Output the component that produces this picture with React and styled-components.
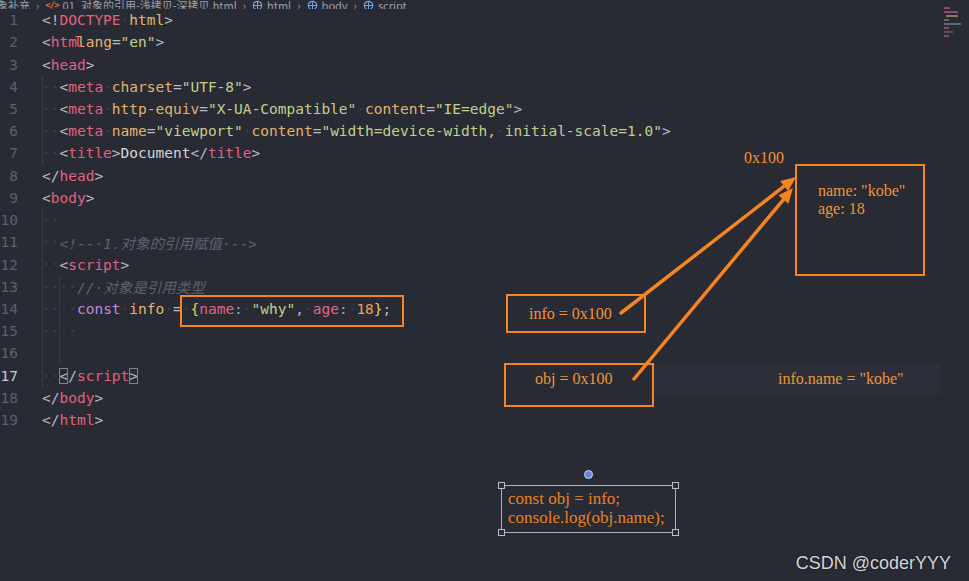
import React from 'react';
import styled, { createGlobalStyle } from 'styled-components';

const GlobalStyle = createGlobalStyle`
  html, body { margin: 0; padding: 0; background: #282a34; }
  body { width: 969px; height: 581px; overflow: hidden; }
`;

const colors = {
  p: '#b7bcc7',
  tag: '#e2617f',
  attr: '#e3b46a',
  str: '#c3d08c',
  text: '#d6d6d6',
  com: '#5d6270',
  kw: '#bd8ad8',
  vr: '#e6b675',
  br: '#e6cf4a',
  prop: '#e3648a',
  num: '#eda05c',
  col: '#8fb2b6',
  ws: '#3c404b',
};

const Screen = styled.div`
  position: relative;
  width: 969px;
  height: 581px;
  background: #282a34;
  overflow: hidden;
`;

const Breadcrumb = styled.div`
  height: 9px;
  display: flex;
  align-items: flex-end;
  gap: 6px;
  margin-left: -14px;
  overflow: hidden;
  font-family: 'Noto Sans CJK SC', 'Noto Sans', sans-serif;
  font-size: 11px;
  line-height: 13px;
  color: #9ca0aa;
  white-space: nowrap;
`;

const Crumb = styled.span`
  display: inline-flex;
  align-items: center;
  gap: 4px;
  margin-bottom: -3px;
`;

const FileIcon = styled.span`
  font-family: 'DejaVu Sans Mono', monospace;
  font-size: 9px;
  font-weight: bold;
  letter-spacing: -1px;
  color: #e0772f;
`;

const Editor = styled.div`
  display: flex;
  flex-direction: column;
  font-family: 'DejaVu Sans Mono', 'Noto Sans CJK SC', monospace;
  font-size: 14.5px;
  white-space: pre;
`;

const Line = styled.div`
  display: flex;
  align-items: center;
  height: 22.22px;
`;

const LineNo = styled.span`
  width: 18px;
  text-align: right;
  color: ${(p) => (p.$active ? '#c9ccd3' : '#5c606d')};
  margin-right: 24px;
`;

const Code = styled.span`
  display: flex;
  align-items: center;
  height: 100%;
`;

const Indent = styled.span`
  display: inline-block;
  height: 100%;
  line-height: 22.22px;
  box-shadow: inset 1px 0 0 #3a3d48;
  color: ${colors.ws};
`;

const Tok = styled.span`
  color: ${(p) => colors[p.$t]};
  font-style: ${(p) => (p.$t === 'com' ? 'italic' : 'normal')};
  ${(p) => (p.$boxed ? 'outline: 1px solid #7d818b; outline-offset: -1px;' : '')}
  ${(p) => (p.$ghost ? `text-shadow: -3px 0 ${colors.tag};` : '')}
`;

const Minimap = styled.div`
  position: absolute;
  top: 7px;
  left: 942px;
  display: flex;
  flex-direction: column;
  gap: 2px;
`;

const MiniBar = styled.span`
  display: block;
  height: 2px;
  width: ${(p) => p.$w}px;
  margin-left: ${(p) => p.$x}px;
  background: ${(p) => p.$c};
  opacity: 0.6;
`;

const Diagram = styled.div`
  position: absolute;
  inset: 0;
  pointer-events: none;
  font-family: 'Liberation Serif', 'Times New Roman', serif;
  font-size: 16px;
  color: #f39436;
`;

const Node = styled.div`
  position: absolute;
  left: ${(p) => p.$x}px;
  top: ${(p) => p.$y}px;
  width: ${(p) => (p.$w ? `${p.$w}px` : 'auto')};
  height: ${(p) => (p.$h ? `${p.$h}px` : 'auto')};
  box-sizing: border-box;
  line-height: 18px;
  white-space: nowrap;
`;

const Frame = styled(Node)`
  border: 2px solid #f5861f;
  display: flex;
  align-items: ${(p) => p.$align || 'center'};
  padding: ${(p) => p.$pad || '0'};
`;

const Band = styled(Node)`
  background: #2c2f39;
`;

const Selection = styled(Node)`
  border: 1px solid #aeb2bc;
  padding: 3px 6px 0;
  font-size: 17px;
  line-height: 19px;
  color: #e8821e;
`;

const Handle = styled.span`
  position: absolute;
  width: 5px;
  height: 5px;
  border: 1px solid #b8bcc6;
  background: #2a2d37;
  ${(p) => (p.$top ? 'top: -4px;' : 'bottom: -4px;')}
  ${(p) => (p.$left ? 'left: -4px;' : 'right: -4px;')}
`;

const Rotate = styled.span`
  position: absolute;
  left: 82px;
  top: -16px;
  width: 7px;
  height: 7px;
  border-radius: 50%;
  background: #6688d6;
  border: 1px solid #cfdaf3;
`;

const Arrows = styled.svg`
  position: absolute;
  inset: 0;
`;

const Watermark = styled.div`
  position: absolute;
  right: 18px;
  bottom: 7px;
  font-family: 'Liberation Sans', Arial, sans-serif;
  font-size: 18px;
  color: #d4d4d4;
  text-shadow: 0 0 2px rgba(0, 0, 0, 0.6);
`;

const S = '·';

const lines = [
  { n: 1, toks: [['p', '<!'], ['tag', 'DOCTYPE'], ['ws', S], ['attr', 'html'], ['p', '>']] },
  { n: 2, toks: [['p', '<'], ['tag', 'htm'], ['attr', 'l', 'ghost'], ['attr', 'ang'], ['p', '='], ['str', '"en"'], ['p', '>']] },
  { n: 3, toks: [['p', '<'], ['tag', 'head'], ['p', '>']] },
  { n: 4, indent: [1], toks: [['p', '<'], ['tag', 'meta'], ['ws', S], ['attr', 'charset'], ['p', '='], ['str', '"UTF-8"'], ['p', '>']] },
  { n: 5, indent: [1], toks: [['p', '<'], ['tag', 'meta'], ['ws', S], ['attr', 'http-equiv'], ['p', '='], ['str', '"X-UA-Compatible"'], ['ws', S], ['attr', 'content'], ['p', '='], ['str', '"IE=edge"'], ['p', '>']] },
  { n: 6, indent: [1], toks: [['p', '<'], ['tag', 'meta'], ['ws', S], ['attr', 'name'], ['p', '='], ['str', '"viewport"'], ['ws', S], ['attr', 'content'], ['p', '='], ['str', '"width=device-width,'], ['ws', S], ['str', 'initial-scale=1.0"'], ['p', '>']] },
  { n: 7, indent: [1], toks: [['p', '<'], ['tag', 'title'], ['p', '>'], ['text', 'Document'], ['p', '</'], ['tag', 'title'], ['p', '>']] },
  { n: 8, toks: [['p', '</'], ['tag', 'head'], ['p', '>']] },
  { n: 9, toks: [['p', '<'], ['tag', 'body'], ['p', '>']] },
  { n: 10, indent: [1], toks: [] },
  { n: 11, indent: [1], toks: [['com', '<!--·1.对象的引用赋值·-->']] },
  { n: 12, indent: [1], toks: [['p', '<'], ['tag', 'script'], ['p', '>']] },
  { n: 13, indent: [1, 1], toks: [['com', '//·对象是引用类型']] },
  { n: 14, indent: [1, 1], toks: [['kw', 'const'], ['ws', S], ['vr', 'info'], ['ws', S], ['p', '='], ['ws', S], ['br', '{'], ['prop', 'name'], ['col', ':'], ['ws', S], ['str', '"why"'], ['p', ','], ['ws', S], ['prop', 'age'], ['col', ':'], ['ws', S], ['num', '18'], ['br', '}'], ['p', ';']] },
  { n: 15, indent: [1, 1], toks: [] },
  { n: 16, indent: [0, 0], toks: [] },
  { n: 17, active: true, indent: [1], toks: [['p', '<', 'boxed'], ['p', '/'], ['tag', 'script'], ['p', '>', 'boxed']] },
  { n: 18, toks: [['p', '</'], ['tag', 'body'], ['p', '>']] },
  { n: 19, toks: [['p', '</'], ['tag', 'html'], ['p', '>']] },
];

const CodeLine = ({ n, toks, indent = [], active }) => (
  <Line>
    <LineNo $active={active}>{n}</LineNo>
    <Code>
      {indent.map((d, i) => (
        <Indent key={i}>{d ? '··' : '\u00a0\u00a0'}</Indent>
      ))}
      {toks.map(([t, s, flag], i) => (
        <Tok key={i} $t={t} $boxed={flag === 'boxed'} $ghost={flag === 'ghost'}>
          {s}
        </Tok>
      ))}
    </Code>
  </Line>
);

const TagIcon = () => (
  <svg width="11" height="11" viewBox="0 0 12 12">
    <circle cx="6" cy="6" r="4.6" fill="none" stroke="#75a6e2" strokeWidth="1.3" />
    <path d="M6 1.4v9.2M1.4 6h9.2" stroke="#75a6e2" strokeWidth="1.1" />
  </svg>
);

const Arrow = ({ x1, y1, x2, y2 }) => {
  const a = Math.atan2(y2 - y1, x2 - x1);
  const len = 15;
  const wid = 6.5;
  const bx = x2 - len * Math.cos(a);
  const by = y2 - len * Math.sin(a);
  const px = -Math.sin(a) * wid;
  const py = Math.cos(a) * wid;
  return (
    <g>
      <line x1={x1} y1={y1} x2={bx} y2={by} stroke="#f5861f" strokeWidth="3.5" strokeLinecap="round" />
      <polygon points={`${x2},${y2} ${bx + px},${by + py} ${bx - px},${by - py}`} fill="#f5861f" />
    </g>
  );
};

const miniBars = [
  { x: 2, w: 6, c: '#d8607e' },
  { x: 2, w: 14, c: '#d8607e' },
  { x: 4, w: 12, c: '#c9b36a' },
  { x: 2, w: 5, c: '#8a8e98' },
  { x: 2, w: 17, c: '#8a8e98' },
  { x: 2, w: 5, c: '#d8607e' },
  { x: 2, w: 9, c: '#5f6fa0' },
  { x: 2, w: 5, c: '#d8607e' },
];

export default function App() {
  return (
    <Screen>
      <GlobalStyle />
      <Breadcrumb>
        <Crumb>对象补充</Crumb>
        <Crumb>›</Crumb>
        <Crumb>
          <FileIcon>&lt;/&gt;</FileIcon>01_对象的引用-浅拷贝-深拷贝.html
        </Crumb>
        <Crumb>›</Crumb>
        <Crumb>
          <TagIcon />
          html
        </Crumb>
        <Crumb>›</Crumb>
        <Crumb>
          <TagIcon />
          body
        </Crumb>
        <Crumb>›</Crumb>
        <Crumb>
          <TagIcon />
          script
        </Crumb>
      </Breadcrumb>

      <Editor>
        {lines.map((l) => (
          <CodeLine key={l.n} {...l} />
        ))}
      </Editor>

      <Minimap>
        {miniBars.map((b, i) => (
          <MiniBar key={i} $x={b.x} $w={b.w} $c={b.c} />
        ))}
      </Minimap>

      <Diagram>
        <Band $x={653} $y={364} $w={287} $h={31} />
        <Frame $x={180} $y={295} $w={224} $h={32} />

        <Node $x={744} $y={149}>0x100</Node>
        <Frame $x={795} $y={164} $w={130} $h={112} $align="flex-start" $pad="16px 0 0 21px">
          <div>
            name: "kobe"
            <br />
            age: 18
          </div>
        </Frame>

        <Frame $x={506} $y={294} $w={140} $h={39} $pad="0 0 0 21px">info = 0x100</Frame>
        <Frame $x={504} $y={363} $w={150} $h={44} $align="flex-start" $pad="5px 0 0 29px">obj = 0x100</Frame>
        <Node $x={778} $y={370}>info.name = "kobe"</Node>

        <Arrows width="969" height="581" viewBox="0 0 969 581">
          <Arrow x1={621} y1={313} x2={796} y2={177} />
          <Arrow x1={634} y1={379} x2={793} y2={188} />
        </Arrows>

        <Selection $x={501} $y={485} $w={175} $h={48}>
          <Rotate />
          <Handle $top $left />
          <Handle $top />
          <Handle $left />
          <Handle />
          const obj = info;
          <br />
          console.log(obj.name);
        </Selection>
      </Diagram>

      <Watermark>CSDN @coderYYY</Watermark>
    </Screen>
  );
}
